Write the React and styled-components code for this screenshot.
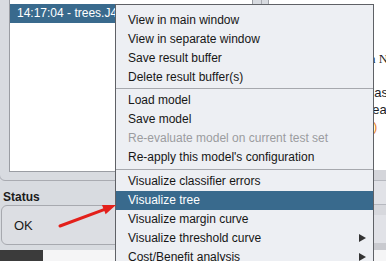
import styled, { createGlobalStyle } from "styled-components"

const GlobalStyle = createGlobalStyle`
  html, body {
    margin: 0;
    padding: 0;
  }
  body {
    width: 386px;
    height: 261px;
    overflow: hidden;
    background: #d8dbe0;
    font-family: "Liberation Sans", Arial, sans-serif;
  }
`

const Screen = styled.div`
  position: relative;
  width: 386px;
  height: 261px;
  overflow: hidden;
  display: flex;
  flex-direction: column;
  background: #d8dbe0;
`
const Main = styled.div`
  display: flex;
  height: 250px;
`
const LeftColumn = styled.div`
  width: 262px;
  flex-shrink: 0;
  display: flex;
  flex-direction: column;
`
const ResultFrame = styled.div`
  height: 191px;
  margin: -10px 0 0 -1px;
  padding: 7px 8px 8px 9px;
  box-sizing: border-box;
  border: 1px solid #a9abb1;
  border-radius: 6px;
  display: flex;
`
const ResultList = styled.div`
  flex: 1;
  background: #ffffff;
  border: 1px solid #9a9da3;
  padding-top: 5px;
  overflow: hidden;
`
const ResultRow = styled.div`
  height: 19px;
  line-height: 19px;
  padding-left: 7px;
  font-size: 12px;
  white-space: nowrap;
  color: ${p => (p.$selected ? "#ffffff" : "#1a1a1a")};
  background: ${p => (p.$selected ? "#396a8d" : "transparent")};
`
const StatusLabel = styled.div`
  margin-top: 9px;
  padding-left: 3px;
  font-size: 12px;
  font-weight: bold;
  line-height: 15px;
  color: #1b1b1b;
`
const StatusBox = styled.div`
  height: 40px;
  margin-left: 1px;
  box-sizing: border-box;
  border: 1px solid #a7a9af;
  border-radius: 6px;
  background: #dcdee3;
  display: flex;
  align-items: center;
  padding-left: 12px;
  font-size: 13px;
  color: #1a1a1a;
`
const RightColumn = styled.div`
  flex: 1;
  display: flex;
  flex-direction: column;
`
const OutputArea = styled.div`
  height: 172px;
  margin-left: 6px;
  padding-top: 16px;
  box-sizing: border-box;
  background: #ffffff;
  border-left: 1px solid #a0a3a9;
  overflow: hidden;
`
const OutputLine = styled.div`
  height: 17px;
  line-height: 17px;
  padding-left: ${p => p.$indent || 0}px;
  white-space: pre;
  font-family: ${p => (p.$serif ? '"Liberation Serif", serif' : '"Liberation Sans", sans-serif')};
  font-size: 13px;
  color: ${p => p.$color || "#1c1c24"};
`
const Band = styled.div`
  height: ${p => p.$h}px;
  background: ${p => p.$bg};
  border-bottom: ${p => (p.$line ? "1px solid #b6b8bf" : "none")};
  flex-shrink: 0;
`
const BottomBar = styled.div`
  height: 11px;
  display: flex;
`
const DarkBlock = styled.div`
  width: 43px;
  background: #3b3b3b;
`
const LightBlock = styled.div`
  flex: 1;
  background: #f5f5f6;
`

const Menu = styled.div`
  position: absolute;
  left: 115px;
  top: 4px;
  width: 259px;
  height: 280px;
  box-sizing: border-box;
  padding-top: 6px;
  background: #edeff3;
  border: 1px solid #5f6166;
`
const MenuItem = styled.div`
  position: relative;
  height: 19px;
  line-height: 19px;
  padding-left: 12px;
  font-size: 12px;
  white-space: nowrap;
  color: ${p => (p.$active ? "#ffffff" : p.$disabled ? "#9b9c9f" : "#161616")};
  background: ${p => (p.$active ? "#396a8d" : "transparent")};
`
const SubArrow = styled.span`
  position: absolute;
  right: 7px;
  top: 5px;
  width: 0;
  height: 0;
  border-left: 7px solid #333333;
  border-top: 4px solid transparent;
  border-bottom: 4px solid transparent;
`
const Separator = styled.div`
  height: 1px;
  background: #a6a8ad;
  margin: ${p => p.$top}px 0 2px;
`
const Overlay = styled.svg`
  position: absolute;
  left: 0;
  top: 0;
  pointer-events: none;
`

const items = [
  [
    { label: "View in main window" },
    { label: "View in separate window" },
    { label: "Save result buffer" },
    { label: "Delete result buffer(s)" },
  ],
  [
    { label: "Load model" },
    { label: "Save model" },
    { label: "Re-evaluate model on current test set", disabled: true },
    { label: "Re-apply this model's configuration" },
  ],
  [
    { label: "Visualize classifier errors" },
    { label: "Visualize tree", active: true },
    { label: "Visualize margin curve" },
    { label: "Visualize threshold curve", sub: true },
    { label: "Cost/Benefit analysis", sub: true },
  ],
]

const App = () => {
  return (
    <Screen>
      <GlobalStyle />
      <Main>
        <LeftColumn>
          <ResultFrame>
            <ResultList>
              <ResultRow $selected>14:17:04 - trees.J48</ResultRow>
            </ResultList>
          </ResultFrame>
          <StatusLabel>Status</StatusLabel>
          <StatusBox>OK</StatusBox>
        </LeftColumn>
        <RightColumn>
          <OutputArea>
            <OutputLine />
            <OutputLine />
            <OutputLine $serif $indent={100}>n N</OutputLine>
            <OutputLine />
            <OutputLine $indent={93}>Class</OutputLine>
            <OutputLine $indent={96}>Leaves</OutputLine>
            <OutputLine $indent={104} $color="#e8841c">)</OutputLine>
          </OutputArea>
          <Band $h={10} $bg="#d4d5da" $line />
          <Band $h={23} $bg="#e1e2e7" $line />
          <Band $h={10} $bg="#d7d8dd" />
          <Band $h={28} $bg="#e1e2e7" />
          <Band $h={7} $bg="#c9cacf" />
        </RightColumn>
      </Main>
      <BottomBar>
        <DarkBlock />
        <LightBlock />
      </BottomBar>

      <Menu>
        {items.map((group, gi) => (
          <div key={gi}>
            {gi > 0 && <Separator $top={gi === 1 ? 1 : 2} />}
            {group.map(it => (
              <MenuItem key={it.label} $active={it.active} $disabled={it.disabled}>
                {it.label}
                {it.sub && <SubArrow />}
              </MenuItem>
            ))}
          </div>
        ))}
      </Menu>

      <Overlay width="386" height="261" viewBox="0 0 386 261">
        <line x1="60" y1="226" x2="104" y2="209.6" stroke="#e3201b" strokeWidth="3" strokeLinecap="round" />
        <polygon points="116,205 105.6,214.3 102,204.9" fill="#e3201b" />
      </Overlay>
    </Screen>
  )
}

export default App
